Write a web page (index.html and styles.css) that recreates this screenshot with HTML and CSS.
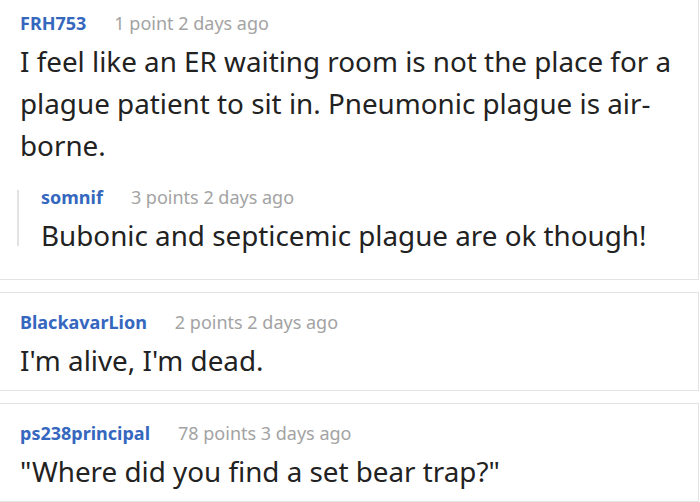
FILE: index.html
```html
<!DOCTYPE html>
<html>
<head>
<meta charset="utf-8">
<link rel="stylesheet" href="styles.css">
</head>
<body>
<div class="thread">
  <div class="card card-first">
    <div class="meta"><span class="user">FRH753</span><span class="info">1 point 2 days ago</span></div>
    <p class="text">I feel like an ER waiting room is not the place for a plague patient to sit in. Pneumonic plague is air-borne.</p>
    <div class="reply">
      <div class="meta"><span class="user">somnif</span><span class="info">3 points 2 days ago</span></div>
      <p class="text">Bubonic and septicemic plague are ok though!</p>
    </div>
  </div>
  <div class="card">
    <div class="meta"><span class="user">BlackavarLion</span><span class="info">2 points 2 days ago</span></div>
    <p class="text">I'm alive, I'm dead.</p>
  </div>
  <div class="card">
    <div class="meta"><span class="user">ps238principal</span><span class="info">78 points 3 days ago</span></div>
    <p class="text">"Where did you find a set bear trap?"</p>
  </div>
</div>
</body>
</html>
```
FILE: styles.css
```css
html, body {
  margin: 0;
  padding: 0;
  background: #ffffff;
  overflow: hidden;
}
body {
  font-family: "Noto Sans", "Open Sans", sans-serif;
  color: #222222;
}
.thread {
  display: flex;
  flex-direction: column;
  gap: 12px;
  margin: -7px 1px 0 -1px;
}
.card {
  border: 1px solid #e3e3e3;
  padding: 17px 20px 9px 20px;
  background: #fff;
}
.card-first {
  padding-bottom: 23px;
}
.meta {
  display: flex;
  align-items: baseline;
  gap: 28px;
  font-size: 18px;
  line-height: 24px;
}
.user {
  font-weight: 700;
  color: #3567bf;
}
.info {
  color: #a3a3a3;
}
.text {
  margin: 5px 0 0 0;
  font-size: 27.8px;
  line-height: 42px;
}
.reply {
  margin-top: 19px;
  margin-left: -3px;
  padding-left: 24px;
  background-image: linear-gradient(#e2e2e2, #e2e2e2);
  background-repeat: no-repeat;
  background-size: 2px calc(100% - 15px);
  background-position: 0 5px;
}
```
